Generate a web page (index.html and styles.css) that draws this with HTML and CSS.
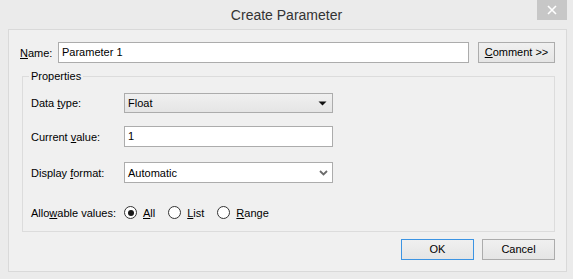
FILE: index.html
```html
<!DOCTYPE html>
<html lang="en">
<head>
    <meta charset="UTF-8">
    <title>Create Parameter</title>
    <link rel="stylesheet" href="styles.css">
</head>
<body>
    <div class="window">
        <div class="titlebar">
            <span></span>
            <div class="title">Create Parameter</div>
            <div class="close-btn">
                <svg width="10" height="10" viewBox="0 0 10 10">
                    <path d="M1 1 L9 9 M9 1 L1 9" stroke="#fff" stroke-width="1.6"/>
                </svg>
            </div>
        </div>

        <div class="client">
            <div class="name-row">
                <span class="name-label"><u>N</u>ame:</span>
                <div class="textbox name-box">Parameter 1</div>
                <div class="btn comment-btn"><u>C</u>omment &gt;&gt;</div>
            </div>

            <fieldset class="props">
                <legend>Properties</legend>

                <div class="field field-type">
                    <span class="field-label">Data <u>t</u>ype:</span>
                    <div class="control dropdown">
                        <span>Float</span>
                        <svg width="9" height="5" viewBox="0 0 9 5"><path d="M0.5 0.5 H8.5 L4.5 4.5 Z" fill="#111"/></svg>
                    </div>
                </div>

                <div class="field field-value">
                    <span class="field-label">Current <u>v</u>alue:</span>
                    <div class="control textbox">1</div>
                </div>

                <div class="field field-format">
                    <span class="field-label">Display <u>f</u>ormat:</span>
                    <div class="control combo">
                        <span>Automatic</span>
                        <svg width="9" height="6" viewBox="0 0 9 6"><path d="M1 1 L4.5 4.5 L8 1" fill="none" stroke="#6b6b6b" stroke-width="1.8"/></svg>
                    </div>
                </div>

                <div class="field field-allow">
                    <span class="field-label">Allo<u>w</u>able values:</span>
                    <div class="radios">
                        <span class="radio-opt"><span class="radio checked"></span><span><u>A</u>ll</span></span>
                        <span class="radio-opt"><span class="radio"></span><span><u>L</u>ist</span></span>
                        <span class="radio-opt"><span class="radio"></span><span><u>R</u>ange</span></span>
                    </div>
                </div>
            </fieldset>

            <div class="actions">
                <div class="btn btn-ok">OK</div>
                <div class="btn">Cancel</div>
            </div>
        </div>
    </div>
</body>
</html>
```

FILE: styles.css
```css
body {
    margin: 0;
    font-family: 'Liberation Sans', Arial, sans-serif;
    font-size: 11px;
    color: #000;
    background-color: #ebebeb;
}

u {
    text-decoration: underline;
    text-underline-offset: 1px;
}

.window {
    width: 573px;
    height: 279px;
    background-color: #ebebeb;
    display: flex;
    flex-direction: column;
}

.titlebar {
    height: 29px;
    display: grid;
    grid-template-columns: 1fr auto 1fr;
}

.title {
    font-size: 14px;
    color: #333;
    line-height: 31px;
}

.close-btn {
    justify-self: end;
    width: 30px;
    height: 20px;
    margin-right: 6px;
    background-color: #c7c7c7;
    display: flex;
    align-items: center;
    justify-content: center;
}

.client {
    flex: 1;
    margin: 0 6px 7px 8px;
    border: 1px solid #d9d9d9;
    background-color: #f0f0f0;
    display: flex;
    flex-direction: column;
}

.name-row {
    display: flex;
    align-items: center;
    padding: 12px 11px 0 11px;
}

.name-label {
    width: 38px;
}

.textbox {
    box-sizing: border-box;
    height: 21px;
    background-color: #fff;
    border: 1px solid #acacac;
    padding: 0 3px;
    line-height: 19px;
}

.name-box {
    width: 411px;
}

.btn {
    box-sizing: border-box;
    height: 21px;
    width: 73px;
    border: 1px solid #acacac;
    background: linear-gradient(#f0f0f0, #e5e5e5);
    text-align: center;
    line-height: 19px;
}

.comment-btn {
    width: 77px;
    margin-left: 9px;
}

.props {
    margin: 7px 11px 0 13px;
    padding: 10px 8px 12px 8px;
    border: 1px solid #dcdcdc;
    border-radius: 0;
}

.props legend {
    padding: 0 2px;
    margin-left: -2px;
    line-height: 13px;
}

.field {
    display: flex;
    align-items: center;
}

.field-label {
    width: 93px;
}

.control {
    width: 209px;
}

.dropdown {
    box-sizing: border-box;
    height: 20px;
    border: 1px solid #acacac;
    background: linear-gradient(#f0f0f0, #e5e5e5);
    padding: 0 5px 0 3px;
    display: flex;
    align-items: center;
    justify-content: space-between;
}

.combo {
    box-sizing: border-box;
    height: 21px;
    border: 1px solid #acacac;
    background-color: #fff;
    padding: 0 4px 0 3px;
    display: flex;
    align-items: center;
    justify-content: space-between;
}

.field-value {
    margin-top: 13px;
}

.field-format {
    margin-top: 15px;
}

.field-allow {
    margin-top: 23px;
    height: 13px;
}

.radios {
    display: flex;
    align-items: center;
    gap: 13px;
}

.radio-opt {
    display: flex;
    align-items: center;
    gap: 6px;
}

.radio {
    box-sizing: border-box;
    width: 13px;
    height: 13px;
    border: 1px solid #333;
    border-radius: 50%;
    background-color: #fff;
    display: flex;
    align-items: center;
    justify-content: center;
}

.radio.checked::after {
    content: "";
    width: 6px;
    height: 6px;
    border-radius: 50%;
    background-color: #1a1a1a;
}

.actions {
    display: flex;
    justify-content: flex-end;
    gap: 8px;
    padding: 7px 11px 0 0;
}

.btn-ok {
    border-color: #3c94e3;
}
```
